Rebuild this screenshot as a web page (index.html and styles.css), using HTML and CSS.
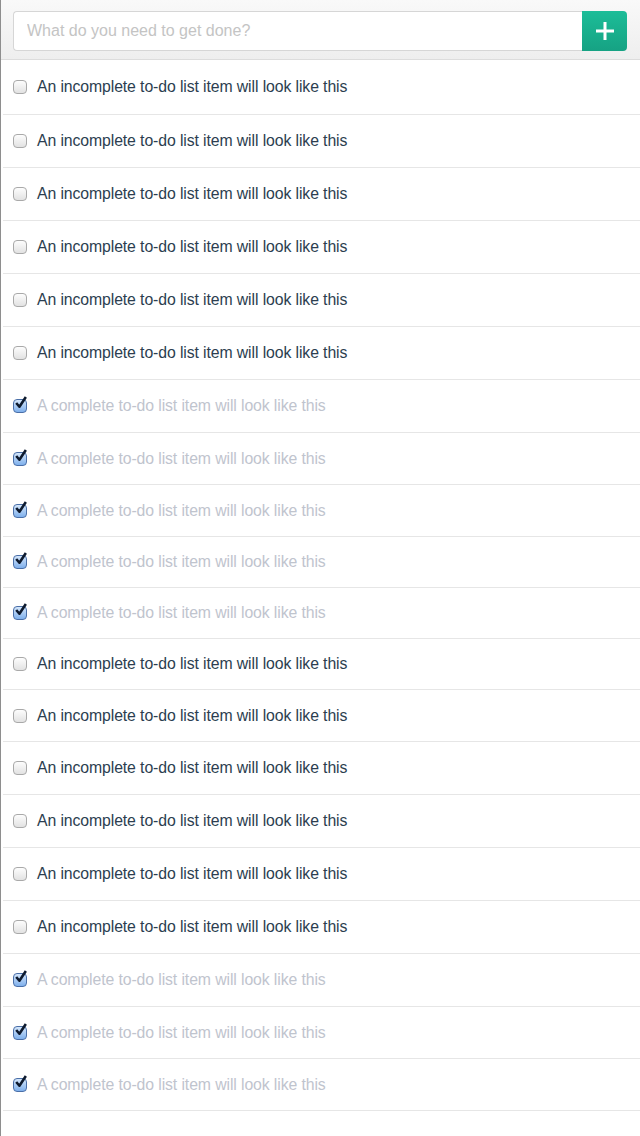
FILE: index.html
```html
<!DOCTYPE html>
<html>
<head>
<meta charset="utf-8">
<link rel="stylesheet" href="styles.css">
</head>
<body>
<div class="app">
  <header class="bar">
    <div class="entry">
      <input class="field" type="text" placeholder="What do you need to get done?">
      <button class="add" aria-label="Add">
        <svg width="20" height="20" viewBox="0 0 20 20"><path d="M10 1v18M1 10h18" stroke="#fff" stroke-width="3"/></svg>
      </button>
    </div>
  </header>
  <ul class="list">
    <li class="item first"><span class="box"></span><span class="txt">An incomplete to-do list item will look like this</span></li>
    <li class="item"><span class="box"></span><span class="txt">An incomplete to-do list item will look like this</span></li>
    <li class="item"><span class="box"></span><span class="txt">An incomplete to-do list item will look like this</span></li>
    <li class="item"><span class="box"></span><span class="txt">An incomplete to-do list item will look like this</span></li>
    <li class="item"><span class="box"></span><span class="txt">An incomplete to-do list item will look like this</span></li>
    <li class="item"><span class="box"></span><span class="txt">An incomplete to-do list item will look like this</span></li>
    <li class="item done tall"><span class="box on"><svg viewBox="0 0 14 14" width="15" height="15"><path d="M3 6.5l3 3.5 6-9" fill="none" stroke="#0d1a2e" stroke-width="2.4" stroke-linejoin="round"/></svg></span><span class="txt">A complete to-do list item will look like this</span></li>
    <li class="item done"><span class="box on"><svg viewBox="0 0 14 14" width="15" height="15"><path d="M3 6.5l3 3.5 6-9" fill="none" stroke="#0d1a2e" stroke-width="2.4" stroke-linejoin="round"/></svg></span><span class="txt">A complete to-do list item will look like this</span></li>
    <li class="item done"><span class="box on"><svg viewBox="0 0 14 14" width="15" height="15"><path d="M3 6.5l3 3.5 6-9" fill="none" stroke="#0d1a2e" stroke-width="2.4" stroke-linejoin="round"/></svg></span><span class="txt">A complete to-do list item will look like this</span></li>
    <li class="item done short"><span class="box on"><svg viewBox="0 0 14 14" width="15" height="15"><path d="M3 6.5l3 3.5 6-9" fill="none" stroke="#0d1a2e" stroke-width="2.4" stroke-linejoin="round"/></svg></span><span class="txt">A complete to-do list item will look like this</span></li>
    <li class="item done short"><span class="box on"><svg viewBox="0 0 14 14" width="15" height="15"><path d="M3 6.5l3 3.5 6-9" fill="none" stroke="#0d1a2e" stroke-width="2.4" stroke-linejoin="round"/></svg></span><span class="txt">A complete to-do list item will look like this</span></li>
    <li class="item short"><span class="box"></span><span class="txt">An incomplete to-do list item will look like this</span></li>
    <li class="item mid"><span class="box"></span><span class="txt">An incomplete to-do list item will look like this</span></li>
    <li class="item"><span class="box"></span><span class="txt">An incomplete to-do list item will look like this</span></li>
    <li class="item"><span class="box"></span><span class="txt">An incomplete to-do list item will look like this</span></li>
    <li class="item"><span class="box"></span><span class="txt">An incomplete to-do list item will look like this</span></li>
    <li class="item"><span class="box"></span><span class="txt">An incomplete to-do list item will look like this</span></li>
    <li class="item done tall"><span class="box on"><svg viewBox="0 0 14 14" width="15" height="15"><path d="M3 6.5l3 3.5 6-9" fill="none" stroke="#0d1a2e" stroke-width="2.4" stroke-linejoin="round"/></svg></span><span class="txt">A complete to-do list item will look like this</span></li>
    <li class="item done"><span class="box on"><svg viewBox="0 0 14 14" width="15" height="15"><path d="M3 6.5l3 3.5 6-9" fill="none" stroke="#0d1a2e" stroke-width="2.4" stroke-linejoin="round"/></svg></span><span class="txt">A complete to-do list item will look like this</span></li>
    <li class="item done"><span class="box on"><svg viewBox="0 0 14 14" width="15" height="15"><path d="M3 6.5l3 3.5 6-9" fill="none" stroke="#0d1a2e" stroke-width="2.4" stroke-linejoin="round"/></svg></span><span class="txt">A complete to-do list item will look like this</span></li>
  </ul>
</div>
</body>
</html>
```
FILE: styles.css
```css
html, body {
  margin: 0;
  padding: 0;
  background: #fff;
}
body {
  font-family: "Liberation Sans", Arial, sans-serif;
}
.app {
  border-left: 1px solid #8e8e8e;
  min-height: 1136px;
  box-sizing: border-box;
}
.bar {
  height: 60px;
  box-sizing: border-box;
  border-bottom: 1px solid #dcdcdc;
  background: linear-gradient(#f9f9f9, #eeeeee);
  padding: 11px 13px 0 12px;
}
.entry {
  display: flex;
  height: 40px;
}
.field {
  flex: 1;
  height: 40px;
  box-sizing: border-box;
  border: 1px solid #d6d6d6;
  border-right: none;
  border-radius: 4px 0 0 4px;
  padding: 0 13px;
  font-family: "Liberation Sans", Arial, sans-serif;
  font-size: 16px;
  color: #2c3e50;
  background: #fff;
  outline: none;
}
.field::placeholder {
  color: #c4c4c4;
}
.add {
  width: 45px;
  height: 40px;
  border: none;
  border-radius: 0 4px 4px 0;
  background: linear-gradient(#1cbd98, #16a283);
  display: flex;
  align-items: center;
  justify-content: center;
  padding: 0;
}
.list {
  list-style: none;
  margin: 0;
  padding: 0;
}
.item {
  display: flex;
  align-items: center;
  height: 53px;
  box-sizing: border-box;
  border-bottom: 1px solid #e6e6e6;
  margin-left: 2px;
  padding-left: 10px;
}
.item.first {
  height: 55px;
}
.item.done {
  height: 52px;
}
.item.short {
  height: 51px;
}
.item.mid {
  height: 52px;
}
.item.done.tall {
  height: 53px;
}
.box {
  width: 14px;
  height: 14px;
  box-sizing: border-box;
  border: 1px solid #a9a9a9;
  border-radius: 4px;
  background: linear-gradient(#fdfdfd, #e2e2e2);
  margin-right: 10px;
  position: relative;
  flex: none;
}
.box.on {
  border-color: #4a6fa8;
  background: linear-gradient(#d4e6fb, #7fb0ec);
}
.box svg {
  position: absolute;
  left: -1px;
  top: -4px;
}
.txt {
  font-size: 15.8px;
  color: #2c3e50;
  letter-spacing: -0.1px;
}
.done .txt {
  color: #bfc4ce;
}
```
